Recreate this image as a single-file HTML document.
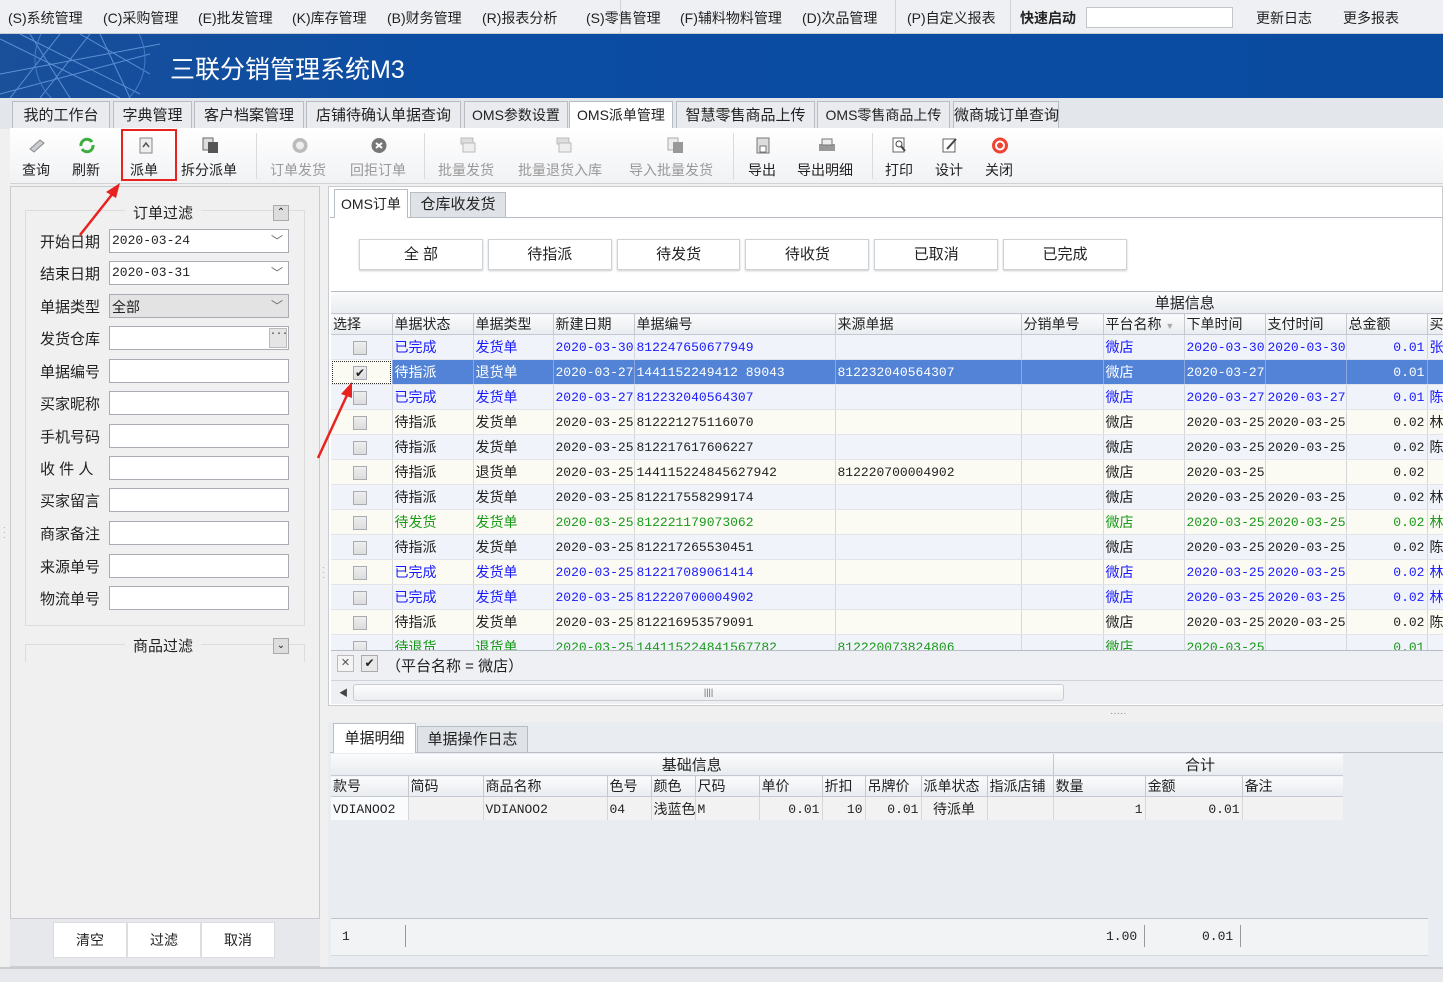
<!DOCTYPE html>
<html><head><meta charset="utf-8"><style>
*{margin:0;padding:0;box-sizing:border-box}
body{width:1443px;height:982px;overflow:hidden;background:#f0f0f0;font-family:"Liberation Sans","Noto Sans CJK SC",sans-serif;font-size:14px;color:#222;position:relative}
.a{position:absolute}
.menu{left:0;top:0;width:1443px;height:34px;background:#eef0f3;border-bottom:1px solid #c9ccd2}
.menu span{position:absolute;top:8px;font-size:14px;color:#222;white-space:nowrap}
.banner{left:0;top:34px;width:1443px;height:64px;background:linear-gradient(90deg,#1a4f9a 0,#0b4da3 30%,#0a4ba0 100%)}
.tabs{left:0;top:98px;width:1443px;height:31px;background:#e3e6ea}
.tab{position:absolute;top:101px;height:28px;background:#e9ebee;border:1px solid #b8bcc3;border-bottom:none;font-size:15px;text-align:center;line-height:27px;white-space:nowrap}
.tb{left:10px;top:128px;width:1433px;height:56px;background:linear-gradient(#fff,#f1f2f4);border-bottom:1px solid #cfd2d6}
.btn{position:absolute;top:160px;font-size:14px;white-space:nowrap}
.dis{color:#999}
.ic{position:absolute;top:137px;width:18px;height:17px}
.sep{position:absolute;top:133px;width:1px;height:46px;background:#d8dadd}
.lp{left:10px;top:186px;width:310px;height:781px;background:#f0f0f0;border:1px solid #c8cbd0}
.lbl{position:absolute;left:40px;font-size:15px}
.inp{position:absolute;left:109px;width:180px;height:24px;background:#fff;border:1px solid #a9adb3;font-family:"Liberation Mono",monospace;font-size:13px;padding:3px 2px}
.dd{position:absolute;right:5px;top:2px;color:#666;font-size:12px}
table{border-collapse:collapse;table-layout:fixed}
td{border-right:1px solid #d4d7dc;border-bottom:1px solid #e2e4e8;height:25px;white-space:nowrap;overflow:hidden;padding:0 2px;font-size:14px}
td.n{font-family:"Liberation Mono",monospace;font-size:13px}
td.r{text-align:right}
.g td{}
tr.o{background:#f0f3f9}tr.e{background:#fbfbf3}
tr.b td{color:#1a1aff}tr.gr td{color:#1a9a1a}
tr.s{background:#5283d6}tr.s td{color:#fff;border-right-color:#8aa8dd}
.cb{display:inline-block;width:14px;height:14px;border:1px solid #a8acb2;background:linear-gradient(#eee,#ddd);margin-left:20px;vertical-align:middle}
th{font-weight:normal;text-align:left;background:linear-gradient(#fafbfc,#e9ecf0);border-right:1px solid #c5c9cf;border-bottom:1px solid #c5c9cf;padding:0 2px;font-size:14px;height:21px;white-space:nowrap}
</style></head><body>
<div class="a menu">
<span style="left:8px">(S)系统管理</span><span style="left:103px">(C)采购管理</span><span style="left:198px">(E)批发管理</span><span style="left:292px">(K)库存管理</span><span style="left:387px">(B)财务管理</span><span style="left:482px">(R)报表分析</span>
<span style="left:586px">(S)零售管理</span><span style="left:680px">(F)辅料物料管理</span><span style="left:802px">(D)次品管理</span><span style="left:907px">(P)自定义报表</span><span style="left:1020px;font-weight:bold">快速启动</span>
<span style="left:1256px">更新日志</span><span style="left:1343px">更多报表</span>
</div>
<div class="a" style="left:1086px;top:7px;width:147px;height:21px;background:#fff;border:1px solid #c3c6cb"></div>
<div class="a" style="left:620px;top:0;width:1px;height:34px;background:#d0d3d8"></div>
<div class="a" style="left:895px;top:0;width:1px;height:34px;background:#d0d3d8"></div>
<div class="a" style="left:1010px;top:0;width:1px;height:34px;background:#d0d3d8"></div>
<div class="a banner">
<svg width="200" height="64" style="position:absolute;left:0;top:0" stroke="#6ea0e0" stroke-width="1" fill="none" opacity=".8">
<path d="M0 5 L120 64 M20 0 L140 60 M30 0 L70 64 M60 0 L10 64 M80 0 L150 40 M90 0 L40 64 M0 40 L160 10 M100 0 L130 64 M0 60 L150 20"/>
<circle cx="90" cy="25" r="55" stroke="#4f86d0"/></svg>
<div class="a" style="left:170px;top:16px;color:#fff;font-size:25px;letter-spacing:0px">三联分销管理系统M3</div>
</div>
<div class="a tabs"></div>
<div class="tab" style="left:12px;width:98px">我的工作台</div>
<div class="tab" style="left:113px;width:79px">字典管理</div>
<div class="tab" style="left:194px;width:110px">客户档案管理</div>
<div class="tab" style="left:306px;width:155px">店铺待确认单据查询</div>
<div class="tab" style="left:464px;width:104px;font-size:14px">OMS参数设置</div>
<div class="tab" style="left:569px;width:104px;background:#fff;height:29px;font-size:14px">OMS派单管理</div>
<div class="tab" style="left:676px;width:139px">智慧零售商品上传</div>
<div class="tab" style="left:817px;width:133px;font-size:14px">OMS零售商品上传</div>
<div class="tab" style="left:953px;width:106px">微商城订单查询</div>
<div class="a tb"></div>
<svg class="ic" style="left:28px" viewBox="0 0 18 17"><path d="M2 12 L12 3 L16 6 L6 15Z" fill="#c9cdd4" stroke="#888"/></svg>
<svg class="ic" style="left:78px" viewBox="0 0 18 17"><path d="M3 9 A6 6 0 0 1 14 5 M15 8 A6 6 0 0 1 4 12" stroke="#3dae3d" stroke-width="3" fill="none"/></svg>
<svg class="ic" style="left:137px" viewBox="0 0 18 17"><rect x="3" y="1" width="12" height="15" fill="#eee" stroke="#888"/><path d="M6 10 L9 6 L12 10" stroke="#555" fill="none" stroke-width="1.5"/></svg>
<svg class="ic" style="left:201px" viewBox="0 0 18 17"><rect x="2" y="1" width="10" height="12" fill="#ddd" stroke="#666"/><rect x="7" y="5" width="10" height="11" fill="#555"/></svg>
<svg class="ic" style="left:291px" viewBox="0 0 18 17"><circle cx="9" cy="8.5" r="7.5" fill="#bbb"/><circle cx="9" cy="8.5" r="4" fill="#eee"/></svg>
<svg class="ic" style="left:370px" viewBox="0 0 18 17"><circle cx="9" cy="8.5" r="7.5" fill="#777"/><path d="M6 6 L12 11 M12 6 L6 11" stroke="#fff" stroke-width="2"/></svg>
<svg class="ic" style="left:459px" viewBox="0 0 18 17"><rect x="2" y="1" width="12" height="6" fill="#ddd" stroke="#bbb"/><rect x="4" y="6" width="12" height="9" fill="#eee" stroke="#bbb"/></svg>
<svg class="ic" style="left:555px" viewBox="0 0 18 17"><rect x="2" y="1" width="12" height="6" fill="#ddd" stroke="#bbb"/><rect x="4" y="6" width="12" height="9" fill="#eee" stroke="#bbb"/></svg>
<svg class="ic" style="left:666px" viewBox="0 0 18 17"><rect x="2" y="1" width="10" height="12" fill="#eee" stroke="#aaa"/><rect x="7" y="5" width="10" height="11" fill="#999"/></svg>
<svg class="ic" style="left:754px" viewBox="0 0 18 17"><rect x="3" y="1" width="12" height="15" fill="#ddd" stroke="#777"/><rect x="6" y="9" width="6" height="6" fill="#fff" stroke="#777"/></svg>
<svg class="ic" style="left:818px" viewBox="0 0 18 17"><rect x="1" y="7" width="16" height="7" fill="#999"/><rect x="4" y="2" width="10" height="6" fill="#eee" stroke="#777"/></svg>
<svg class="ic" style="left:891px" viewBox="0 0 18 17"><rect x="2" y="1" width="11" height="14" fill="#fff" stroke="#666"/><circle cx="8" cy="7" r="3" fill="none" stroke="#444"/><path d="M10 9 L14 14" stroke="#444" stroke-width="2"/></svg>
<svg class="ic" style="left:941px" viewBox="0 0 18 17"><rect x="2" y="2" width="12" height="13" fill="#fff" stroke="#666"/><path d="M6 12 L15 2" stroke="#444" stroke-width="2"/></svg>
<svg class="ic" style="left:991px" viewBox="0 0 18 17"><circle cx="9" cy="8.5" r="8" fill="#e43"/><circle cx="9" cy="8.5" r="4" fill="none" stroke="#fff" stroke-width="2"/></svg>
<span class="btn" style="left:22px">查询</span><span class="btn" style="left:72px">刷新</span><span class="btn" style="left:130px">派单</span><span class="btn" style="left:181px">拆分派单</span>
<span class="btn dis" style="left:270px">订单发货</span><span class="btn dis" style="left:350px">回拒订单</span><span class="btn dis" style="left:438px">批量发货</span><span class="btn dis" style="left:518px">批量退货入库</span><span class="btn dis" style="left:629px">导入批量发货</span>
<span class="btn" style="left:748px">导出</span><span class="btn" style="left:797px">导出明细</span><span class="btn" style="left:885px">打印</span><span class="btn" style="left:935px">设计</span><span class="btn" style="left:985px">关闭</span>
<div class="sep" style="left:256px"></div><div class="sep" style="left:424px"></div><div class="sep" style="left:733px"></div><div class="sep" style="left:872px"></div>
<div class="a" style="left:121px;top:129px;width:56px;height:52px;border:2px solid #e8231f"></div>

<div class="a lp"></div>
<div class="a" style="left:25px;top:210px;width:280px;height:416px;border:1px solid #dcdcdc"></div>
<div class="a" style="left:125px;top:202px;background:#f0f0f0;padding:0 8px;font-size:15px">订单过滤</div>
<div class="a" style="left:273px;top:205px;width:16px;height:16px;border:1px solid #aaa;background:#ddd;font-size:10px;text-align:center;line-height:14px">⌃</div>
<span class="lbl" style="top:231px">开始日期</span><div class="inp" style="top:229px">2020-03-24<span class="dd">﹀</span></div>
<span class="lbl" style="top:263px">结束日期</span><div class="inp" style="top:261px">2020-03-31<span class="dd">﹀</span></div>
<span class="lbl" style="top:296px">单据类型</span><div class="inp" style="top:294px;background:#e3e3e3;font-family:'Liberation Sans','Noto Sans CJK SC',sans-serif;font-size:14px;padding:2px">全部<span class="dd">﹀</span></div>
<span class="lbl" style="top:328px">发货仓库</span><div class="inp" style="top:326px"><span style="position:absolute;right:1px;top:1px;width:18px;height:20px;background:#e5e5e5;border:1px solid #bbb;font-size:10px;text-align:center">···</span></div>
<span class="lbl" style="top:361px">单据编号</span><div class="inp" style="top:359px"></div>
<span class="lbl" style="top:393px">买家昵称</span><div class="inp" style="top:391px"></div>
<span class="lbl" style="top:426px">手机号码</span><div class="inp" style="top:424px"></div>
<span class="lbl" style="top:458px">收 件 人</span><div class="inp" style="top:456px"></div>
<span class="lbl" style="top:490px">买家留言</span><div class="inp" style="top:488px"></div>
<span class="lbl" style="top:523px">商家备注</span><div class="inp" style="top:521px"></div>
<span class="lbl" style="top:556px">来源单号</span><div class="inp" style="top:554px"></div>
<span class="lbl" style="top:588px">物流单号</span><div class="inp" style="top:586px"></div>
<div class="a" style="left:25px;top:644px;width:280px;height:18px;border:1px solid #dcdcdc;border-bottom:none"></div>
<div class="a" style="left:125px;top:635px;background:#f0f0f0;padding:0 8px;font-size:15px">商品过滤</div>
<div class="a" style="left:273px;top:638px;width:16px;height:16px;border:1px solid #aaa;background:#ddd;font-size:10px;text-align:center;line-height:14px">⌄</div>
<div class="a" style="left:10px;top:918px;width:310px;height:48px;background:#e6e8eb;border-top:1px solid #c8cbd0"></div>
<div class="a" style="left:53px;top:922px;width:74px;height:36px;background:#fff;border:1px solid #ddd;text-align:center;line-height:35px">清空</div>
<div class="a" style="left:127px;top:922px;width:74px;height:36px;background:#fff;border:1px solid #ddd;text-align:center;line-height:35px">过滤</div>
<div class="a" style="left:201px;top:922px;width:74px;height:36px;background:#fff;border:1px solid #ddd;text-align:center;line-height:35px">取消</div>
<div class="a" style="left:3px;top:525px;color:#999;font-size:8px;line-height:5px">·<br>·<br>·</div>
<div class="a" style="left:322px;top:565px;color:#999;font-size:8px;line-height:5px">·<br>·<br>·</div>

<!-- right -->
<div class="a" style="left:328px;top:186px;width:1115px;height:520px;background:#fff;border:1px solid #c8cbd0"></div>
<div class="a" style="left:330px;top:217px;width:1113px;height:1px;background:#b8bcc3"></div>
<div class="a" style="left:334px;top:189px;width:74px;height:29px;background:#fff;border:1px solid #b8bcc3;border-bottom:none;text-align:center;line-height:28px;font-size:14px">OMS订单</div>
<div class="a" style="left:410px;top:192px;width:96px;height:25px;background:#dfe2e6;border:1px solid #b8bcc3;border-bottom:none;text-align:center;line-height:24px;font-size:15px">仓库收发货</div>
<div class="a" style="left:359px;top:239px;width:768px;height:31px;display:flex;gap:5px">
<div style="width:124px;background:#fff;border:1px solid #cfd2d6;text-align:center;line-height:29px;font-size:15px;box-shadow:0 1px 2px #ccc">全 部</div>
<div style="width:124px;background:#fff;border:1px solid #cfd2d6;text-align:center;line-height:29px;font-size:15px;box-shadow:0 1px 2px #ccc">待指派</div>
<div style="width:124px;background:#fff;border:1px solid #cfd2d6;text-align:center;line-height:29px;font-size:15px;box-shadow:0 1px 2px #ccc">待发货</div>
<div style="width:124px;background:#fff;border:1px solid #cfd2d6;text-align:center;line-height:29px;font-size:15px;box-shadow:0 1px 2px #ccc">待收货</div>
<div style="width:124px;background:#fff;border:1px solid #cfd2d6;text-align:center;line-height:29px;font-size:15px;box-shadow:0 1px 2px #ccc">已取消</div>
<div style="width:124px;background:#fff;border:1px solid #cfd2d6;text-align:center;line-height:29px;font-size:15px;box-shadow:0 1px 2px #ccc">已完成</div>
</div>
<div class="a" style="left:331px;top:291px;width:1112px;height:359px;overflow:hidden;border-top:1px solid #b8bcc3;background:#fff">
<table style="width:1130px">
<colgroup><col width="61"><col width="81"><col width="80"><col width="81"><col width="201"><col width="186"><col width="82"><col width="81"><col width="81"><col width="81"><col width="81"><col width="54"></colgroup>
<tr><th colspan="12" style="text-align:center;padding-left:560px;font-size:15px">单据信息</th></tr>
<tr><th>选择</th><th>单据状态</th><th>单据类型</th><th>新建日期</th><th>单据编号</th><th>来源单据</th><th>分销单号</th><th>平台名称 <span style="color:#aaa;font-size:9px">▼</span></th><th>下单时间</th><th>支付时间</th><th>总金额</th><th>买</th></tr>
<tr class="o b"><td><span class="cb"></span></td><td>已完成</td><td>发货单</td><td class="n">2020-03-30</td><td class="n">812247650677949</td><td></td><td></td><td>微店</td><td class="n">2020-03-30</td><td class="n">2020-03-30</td><td class="n r">0.01</td><td>张</td></tr>
<tr class="s"><td style="outline:1px dotted #333;outline-offset:-2px;background:#fbfbf3"><span class="cb" style="color:#222;font-size:12px;line-height:12px;text-align:center">✔</span></td><td>待指派</td><td>退货单</td><td class="n">2020-03-27</td><td class="n">1441152249412 89043</td><td class="n">812232040564307</td><td></td><td>微店</td><td class="n">2020-03-27</td><td></td><td class="n r">0.01</td><td></td></tr>
<tr class="o b"><td><span class="cb"></span></td><td>已完成</td><td>发货单</td><td class="n">2020-03-27</td><td class="n">812232040564307</td><td></td><td></td><td>微店</td><td class="n">2020-03-27</td><td class="n">2020-03-27</td><td class="n r">0.01</td><td>陈</td></tr>
<tr class="e"><td><span class="cb"></span></td><td>待指派</td><td>发货单</td><td class="n">2020-03-25</td><td class="n">812221275116070</td><td></td><td></td><td>微店</td><td class="n">2020-03-25</td><td class="n">2020-03-25</td><td class="n r">0.02</td><td>林</td></tr>
<tr class="o"><td><span class="cb"></span></td><td>待指派</td><td>发货单</td><td class="n">2020-03-25</td><td class="n">812217617606227</td><td></td><td></td><td>微店</td><td class="n">2020-03-25</td><td class="n">2020-03-25</td><td class="n r">0.02</td><td>陈</td></tr>
<tr class="e"><td><span class="cb"></span></td><td>待指派</td><td>退货单</td><td class="n">2020-03-25</td><td class="n">144115224845627942</td><td class="n">812220700004902</td><td></td><td>微店</td><td class="n">2020-03-25</td><td></td><td class="n r">0.02</td><td></td></tr>
<tr class="o"><td><span class="cb"></span></td><td>待指派</td><td>发货单</td><td class="n">2020-03-25</td><td class="n">812217558299174</td><td></td><td></td><td>微店</td><td class="n">2020-03-25</td><td class="n">2020-03-25</td><td class="n r">0.02</td><td>林</td></tr>
<tr class="e gr"><td><span class="cb"></span></td><td>待发货</td><td>发货单</td><td class="n">2020-03-25</td><td class="n">812221179073062</td><td></td><td></td><td>微店</td><td class="n">2020-03-25</td><td class="n">2020-03-25</td><td class="n r">0.02</td><td>林</td></tr>
<tr class="o"><td><span class="cb"></span></td><td>待指派</td><td>发货单</td><td class="n">2020-03-25</td><td class="n">812217265530451</td><td></td><td></td><td>微店</td><td class="n">2020-03-25</td><td class="n">2020-03-25</td><td class="n r">0.02</td><td>陈</td></tr>
<tr class="e b"><td><span class="cb"></span></td><td>已完成</td><td>发货单</td><td class="n">2020-03-25</td><td class="n">812217089061414</td><td></td><td></td><td>微店</td><td class="n">2020-03-25</td><td class="n">2020-03-25</td><td class="n r">0.02</td><td>林</td></tr>
<tr class="o b"><td><span class="cb"></span></td><td>已完成</td><td>发货单</td><td class="n">2020-03-25</td><td class="n">812220700004902</td><td></td><td></td><td>微店</td><td class="n">2020-03-25</td><td class="n">2020-03-25</td><td class="n r">0.02</td><td>林</td></tr>
<tr class="e"><td><span class="cb"></span></td><td>待指派</td><td>发货单</td><td class="n">2020-03-25</td><td class="n">812216953579091</td><td></td><td></td><td>微店</td><td class="n">2020-03-25</td><td class="n">2020-03-25</td><td class="n r">0.02</td><td>陈</td></tr>
<tr class="o gr"><td><span class="cb"></span></td><td>待退货</td><td>退货单</td><td class="n">2020-03-25</td><td class="n">144115224841567782</td><td class="n">812220073824806</td><td></td><td>微店</td><td class="n">2020-03-25</td><td></td><td class="n r">0.01</td><td></td></tr>
</table></div>
<div class="a" style="left:331px;top:650px;width:1112px;height:54px;background:#eef0f3;border-top:1px solid #b8bcc3"></div>
<div class="a" style="left:337px;top:655px;width:17px;height:17px;border:1px solid #bbb;background:#f4f4f4;font-size:11px;text-align:center;line-height:15px;color:#555">✕</div>
<div class="a" style="left:361px;top:655px;width:17px;height:17px;border:1px solid #aaa;background:#e8e8e8;font-size:12px;text-align:center;line-height:15px">✔</div>
<div class="a" style="left:386px;top:655px;font-size:15px">（平台名称 = 微店）</div>
<div class="a" style="left:331px;top:680px;width:1112px;height:1px;background:#d0d3d8"></div>
<div class="a" style="left:339px;top:686px;font-size:9px;color:#444">◀</div>
<div class="a" style="left:353px;top:684px;width:711px;height:17px;border:1px solid #c8ccd2;border-radius:3px;background:linear-gradient(#fdfdfd,#eceef1);text-align:center;font-size:9px;line-height:15px;color:#666">||||</div>
<div class="a" style="left:1110px;top:708px;color:#888;font-size:10px">·····</div>

<div class="a" style="left:328px;top:722px;width:1115px;height:245px;background:#e9ecf0"></div>
<div class="a" style="left:330px;top:752px;width:1113px;height:1px;background:#b8bcc3"></div>
<div class="a" style="left:333px;top:723px;width:83px;height:30px;background:#fff;border:1px solid #b8bcc3;border-bottom:none;text-align:center;line-height:30px;font-size:15px">单据明细</div>
<div class="a" style="left:417px;top:726px;width:111px;height:26px;background:#dfe2e6;border:1px solid #b8bcc3;border-bottom:none;text-align:center;line-height:26px;font-size:15px">单据操作日志</div>
<div class="a" style="left:331px;top:754px;width:1012px;height:66px;overflow:hidden;background:#f2f2f2">
<table style="width:1012px">
<colgroup><col width="77"><col width="75"><col width="124"><col width="44"><col width="44"><col width="64"><col width="63"><col width="43"><col width="56"><col width="66"><col width="66"><col width="92"><col width="97"><col width="105"></colgroup>
<tr><th colspan="11" style="text-align:center;font-size:15px">基础信息</th><th colspan="3" style="text-align:center;font-size:15px">合计</th></tr>
<tr><th>款号</th><th>简码</th><th>商品名称</th><th>色号</th><th>颜色</th><th>尺码</th><th>单价</th><th>折扣</th><th>吊牌价</th><th>派单状态</th><th>指派店铺</th><th>数量</th><th>金额</th><th>备注</th></tr>
<tr style="background:#f2f2f2"><td class="n" style="background:#fafbfc">VDIANOO2</td><td></td><td class="n">VDIANOO2</td><td class="n">04</td><td>浅蓝色</td><td class="n">M</td><td class="n r">0.01</td><td class="n r">10</td><td class="n r">0.01</td><td style="text-align:center">待派单</td><td></td><td class="n r">1</td><td class="n r">0.01</td><td></td></tr>
</table></div>
<div class="a" style="left:331px;top:918px;width:1097px;height:38px;background:#f2f3f5;border-top:1px solid #bfc3c9;border-bottom:1px solid #d6d8dc"></div>
<div class="a" style="left:342px;top:929px;font-family:'Liberation Mono',monospace;font-size:13px">1</div>
<div class="a" style="left:405px;top:925px;width:1px;height:22px;background:#999"></div>
<div class="a" style="left:1106px;top:929px;font-family:'Liberation Mono',monospace;font-size:13px">1.00</div>
<div class="a" style="left:1144px;top:925px;width:1px;height:22px;background:#999"></div>
<div class="a" style="left:1202px;top:929px;font-family:'Liberation Mono',monospace;font-size:13px">0.01</div>
<div class="a" style="left:1240px;top:925px;width:1px;height:22px;background:#999"></div>
<div class="a" style="left:0;top:967px;width:1443px;height:15px;background:#e6e8eb;border-top:2px solid #c8cbd0"></div>

<svg class="a" style="left:0;top:0" width="1443" height="982" pointer-events="none">
<path d="M80 235 L114 192" stroke="#e8231f" stroke-width="2.5"/><path d="M120 183 L106 192 L116 198Z" fill="#e8231f"/>
<path d="M318 458 L348 393" stroke="#e8231f" stroke-width="2.5"/><path d="M352 382 L341 394 L352 398Z" fill="#e8231f"/>
</svg>
</body></html>
